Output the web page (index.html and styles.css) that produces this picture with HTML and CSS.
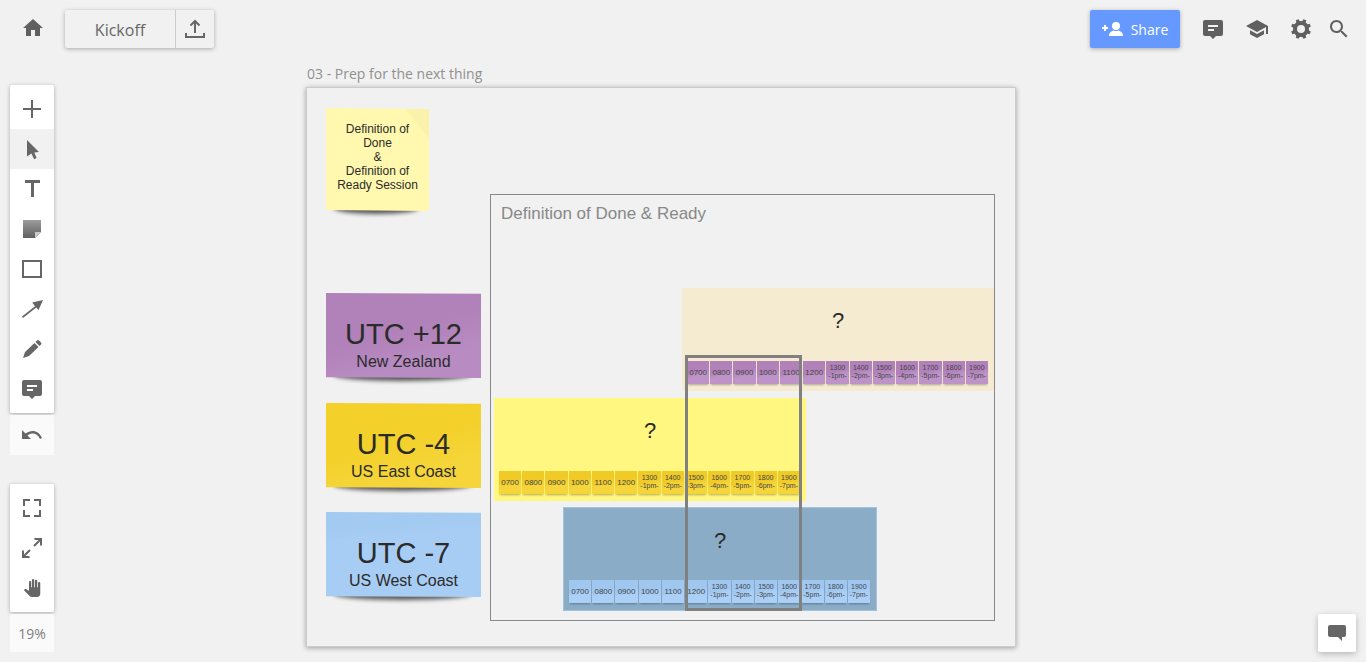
FILE: index.html
```
<!DOCTYPE html>
<html lang="en">
<head>
<meta charset="utf-8">
<meta name="viewport" content="width=device-width, initial-scale=1">
<title>Kickoff</title>
<link rel="stylesheet" href="styles.css">
</head>
<body>
<div class="app">
  <main class="canvas">
    <section class="board">
      <h1 class="board-title">03 - Prep for the next thing</h1>
      <div class="sticky sticky-note">Definition of<br>Done<br>&amp;<br>Definition of<br>Ready Session</div>
      <div class="sticky zone zone-purple"><strong class="zone-name">UTC +12</strong><span class="zone-place">New Zealand</span></div>
      <div class="sticky zone zone-gold"><strong class="zone-name">UTC -4</strong><span class="zone-place">US East Coast</span></div>
      <div class="sticky zone zone-sky"><strong class="zone-name">UTC -7</strong><span class="zone-place">US West Coast</span></div>
      <div class="frame"><h2 class="frame-title">Definition of Done &amp; Ready</h2></div>
      <div class="band band-nz">
        <p class="question">?</p>
        <ol class="hours">
          <li>0700</li><li>0800</li><li>0900</li><li>1000</li><li>1100</li><li>1200</li>
          <li class="pm">1300<br>-1pm-</li><li class="pm">1400<br>-2pm-</li><li class="pm">1500<br>-3pm-</li><li class="pm">1600<br>-4pm-</li><li class="pm">1700<br>-5pm-</li><li class="pm">1800<br>-6pm-</li><li class="pm">1900<br>-7pm-</li>
        </ol>
      </div>
      <div class="band band-east">
        <p class="question">?</p>
        <ol class="hours">
          <li>0700</li><li>0800</li><li>0900</li><li>1000</li><li>1100</li><li>1200</li>
          <li class="pm">1300<br>-1pm-</li><li class="pm">1400<br>-2pm-</li><li class="pm">1500<br>-3pm-</li><li class="pm">1600<br>-4pm-</li><li class="pm">1700<br>-5pm-</li><li class="pm">1800<br>-6pm-</li><li class="pm">1900<br>-7pm-</li>
        </ol>
      </div>
      <div class="band band-west">
        <p class="question">?</p>
        <ol class="hours">
          <li>0700</li><li>0800</li><li>0900</li><li>1000</li><li>1100</li><li>1200</li>
          <li class="pm">1300<br>-1pm-</li><li class="pm">1400<br>-2pm-</li><li class="pm">1500<br>-3pm-</li><li class="pm">1600<br>-4pm-</li><li class="pm">1700<br>-5pm-</li><li class="pm">1800<br>-6pm-</li><li class="pm">1900<br>-7pm-</li>
        </ol>
      </div>
      <div class="overlap"></div>
    </section>
  </main>

  <header class="topbar">
    <button class="icon-btn home" aria-label="Home"><svg class="icon" viewBox="0 0 24 24"><path d="M10 20v-6h4v6h5v-8h3L12 3 2 12h3v8z"/></svg></button>
    <div class="project">
      <button class="project-name">Kickoff</button>
      <button class="project-export" aria-label="Export"><svg class="icon line" viewBox="0 0 24 24"><path d="M12 16V4M7.500 8.500 12 4l4.500 4.500M3 16v4h18v-4"/></svg></button>
    </div>
    <nav class="actions">
      <button class="share"><svg class="share-icon" viewBox="0 0 22 16"><path d="M2 4h2v2h2v2H4v2H2V8H0V6h2z"/><circle cx="14" cy="5" r="4"/><path d="M7 15c0-4 3-5 4.500-5.500q2.500 1.200 5 0C18 10 21 11 21 15z"/></svg>Share</button>
      <button class="icon-btn" aria-label="Comments"><svg class="icon" viewBox="0 0 24 24"><path fill-rule="evenodd" d="M4 3h16q2 0 2 2v12q0 2-2 2h-5l-3 3-3-3H4q-2 0-2-2V5q0-2 2-2zm3 5v2h10V8zm0 4v2h6v-2z"/></svg></button>
      <button class="icon-btn" aria-label="Learning"><svg class="icon" viewBox="0 0 24 24"><path d="M5 13.180v4L12 21l7-3.820v-4L12 17zM12 3 1 9l11 6 9-4.910V17h2V9z"/></svg></button>
      <button class="icon-btn" aria-label="Settings"><svg class="icon" viewBox="0 0 24 24"><circle cx="12" cy="12" r="6" fill="none" stroke="currentColor" stroke-width="4"/><g transform="rotate(22.500 12 12)"><path id="teeth" d="M10 5.500 10.500 2h3l.5 3.500zM10 18.500l.5 3.500h3l.5-3.500zM5.500 10 2 10.500v3l3.500.5zM18.500 10l3.500.5v3l-3.500.5z"/><use href="#teeth" transform="rotate(45 12 12)"/></g></svg></button>
      <button class="icon-btn search" aria-label="Search"><svg class="icon" viewBox="0 0 24 24"><path d="M15.500 14h-.79l-.28-.27C15.410 12.590 16 11.110 16 9.500 16 5.910 13.090 3 9.500 3S3 5.910 3 9.500 5.910 16 9.500 16c1.610 0 3.090-.59 4.230-1.570l.27.28v.79l5 4.990L20.490 19zm-6 0C7.010 14 5 11.990 5 9.500S7.010 5 9.500 5 14 7.010 14 9.500 11.990 14 9.500 14z"/></svg></button>
    </nav>
  </header>

  <div class="workspace">
    <aside class="rail">
      <div class="rail-group">
        <div class="panel">
          <button class="tool" aria-label="Add"><svg class="icon line" viewBox="0 0 24 24"><path d="M12 3v18M3 12h18"/></svg></button>
          <button class="tool selected" aria-label="Select"><svg class="icon" viewBox="0 0 24 24"><path d="M7 3l12 12-4.700.4 2.300 5.600-2.500 1.200-2.700-5.700L7 19.500z"/></svg></button>
          <button class="tool" aria-label="Text"><svg class="icon" viewBox="0 0 24 24"><path d="M5 3h15v3h-6v14h-3V6H5z"/></svg></button>
          <button class="tool" aria-label="Sticky note"><svg class="icon" viewBox="0 0 24 24"><defs><linearGradient id="shade" x1="0" y1="0" x2="0" y2="1"><stop offset="0" stop-color="#9c9c9c"/><stop offset="1" stop-color="#606060"/></linearGradient></defs><path fill="url(#shade)" d="M3 3h18v12l-6 6H3z"/><path fill="#c8c8c8" d="M15 15h6l-6 6z"/></svg></button>
          <button class="tool" aria-label="Shape"><svg class="icon line" viewBox="0 0 24 24"><path d="M3 4h18v16H3z"/></svg></button>
          <button class="tool" aria-label="Connector"><svg class="icon" viewBox="0 0 24 24"><path d="M2 19.500 15 9.200 12.200 5.500 23 3l-4.500 10-2.300-2.600L3 21z"/></svg></button>
          <button class="tool" aria-label="Pen"><svg class="icon" viewBox="0 0 24 24"><path d="M3 21l2-6L14.500 6l4 4L9 19zM15.500 5l1.500-1.500q1-1 2 0l2 2q1 1 0 2L19.500 9z"/></svg></button>
          <button class="tool" aria-label="Comment"><svg class="icon" viewBox="0 0 24 24"><path fill-rule="evenodd" d="M4 3h16q2 0 2 2v12q0 2-2 2h-5l-3 3-3-3H4q-2 0-2-2V5q0-2 2-2zm3 5v2h10V8zm0 4v2h6v-2z"/></svg></button>
        </div>
        <button class="tool faded" aria-label="Undo"><svg class="icon" viewBox="0 0 24 24"><path d="M2 7v9h9l-3.500-3.500c5-3.500 10-2 12.500 3.500l2-1C19 7.500 11.500 6 5.500 10.500z"/></svg></button>
      </div>
      <div class="rail-group">
        <div class="panel">
          <button class="tool" aria-label="Fit to screen"><svg class="icon line" viewBox="0 0 24 24"><path d="M4 10V4h6M14 4h6v6M20 14v6h-6M10 20H4v-6"/></svg></button>
          <button class="tool" aria-label="Zoom to selection"><svg class="icon line" viewBox="0 0 24 24"><path d="M14.500 3H21v6.500M21 3l-7 7M3 14.500V21h6.500M3 21l7-7"/></svg></button>
          <button class="tool" aria-label="Pan"><svg class="icon small" viewBox="0 0 24 24"><path d="M23 5.500V20c0 2.200-1.800 4-4 4h-7.300c-1.080 0-2.100-.43-2.850-1.190L1 14.830s1.260-1.230 1.300-1.250c.22-.19.49-.29.79-.29.22 0 .42.060.6.160.4.010 4.310 2.460 4.310 2.460V4c0-.83.67-1.500 1.500-1.500S11 3.170 11 4v7h1V1.500c0-.83.67-1.500 1.500-1.500S15 .67 15 1.500V11h1V2.500c0-.83.67-1.500 1.500-1.500s1.500.67 1.500 1.500V11h1V5.500c0-.83.67-1.500 1.500-1.500s1.500.67 1.500 1.500z"/></svg></button>
        </div>
        <button class="tool faded zoom-level">19%</button>
      </div>
    </aside>
    <button class="chat" aria-label="Chat"><svg class="icon" viewBox="0 0 24 24"><path d="M5 4h14q2 0 2 2v8q0 2-2 2h-2v4l-4-4H5q-2 0-2-2V6q0-2 2-2z"/></svg></button>
  </div>
</div>
</body>
</html>
```
FILE: styles.css
```
* { box-sizing: border-box; }

body {
  margin: 0;
  background: #f1f1f1;
  color: #666;
  font-family: "Open Sans", "Noto Sans", sans-serif;
  font-size: 14px;
}

button {
  display: flex;
  align-items: center;
  justify-content: center;
  padding: 0;
  border: 0;
  background: none;
  color: inherit;
  font: inherit;
  cursor: pointer;
}

h1, h2, p, ol { margin: 0; padding: 0; font-weight: 400; }
ol { list-style: none; }

.icon { display: block; width: 24px; height: 24px; fill: currentColor; }
.icon.line { fill: none; stroke: currentColor; stroke-width: 2; }
.icon.small { width: 18px; height: 18px; }

.app {
  position: relative;
  display: flex;
  flex-direction: column;
  min-height: 100vh;
  overflow: hidden;
}

/* Top bar */
.topbar {
  position: relative;
  display: flex;
  align-items: center;
  padding: 10px 14px 10px 20px;
}
.icon-btn { width: 26px; height: 38px; color: #606060; }
.home { padding-bottom: 2px; }
.project {
  display: flex;
  height: 38px;
  margin-left: 19px;
  border-radius: 2px;
  box-shadow: 0 1px 4px rgba(0, 0, 0, .3);
  background: #f1f1f1;
}
.project-name { width: 110px; padding-top: 2px; font-size: 16px; }
.project-export { width: 39px; border-left: 1px solid #ccc; }
.actions {
  display: flex;
  align-items: center;
  gap: 18px;
  margin-left: auto;
}
.share {
  gap: 7px;
  width: 90px;
  height: 38px;
  margin-right: 2px;
  border-radius: 2px;
  background: #69f;
  box-shadow: 0 1px 4px rgba(0, 0, 0, .3);
  color: #fff;
}
.share-icon { width: 22px; height: 16px; fill: currentColor; }
.search { margin-left: -6px; }

/* Tool rail */
.workspace {
  display: flex;
  flex: 1;
  align-items: flex-end;
  justify-content: space-between;
  padding: 27px 10px 10px;
}
.rail {
  position: relative;
  display: flex;
  flex-direction: column;
  align-self: stretch;
  justify-content: space-between;
  gap: 20px;
  width: 44px;
}
.rail-group { display: flex; flex-direction: column; gap: 2px; }
.panel {
  padding: 4px 0;
  border-radius: 2px;
  background: #fff;
  box-shadow: 0 1px 4px rgba(0, 0, 0, .3);
}
.tool { width: 100%; height: 40px; }
.tool.selected { background: #f1f1f1; }
.tool.faded { background: #fafafa; }
.tool.zoom-level { height: 38px; color: #808080; }
.chat {
  position: relative;
  width: 38px;
  height: 38px;
  border-radius: 2px;
  background: #fff;
  box-shadow: 0 2px 6px rgba(0, 0, 0, .25);
}

/* Free canvas */
.canvas { position: absolute; inset: 0; }
.board {
  position: absolute;
  left: 306px;
  top: 87px;
  width: 710px;
  height: 560px;
  border: 1px solid #ccc;
  background: #f1f1f1;
  box-shadow: 0 1px 5px rgba(0, 0, 0, .35);
  color: #2b2b2b;
  font-family: "Liberation Sans", Arial, sans-serif;
}
.board-title {
  position: absolute;
  left: 0;
  bottom: 100%;
  padding-bottom: 4px;
  color: #909090;
  font-family: "Open Sans", "Noto Sans", sans-serif;
  font-size: 14px;
  line-height: 20px;
  white-space: nowrap;
}

.sticky { position: absolute; text-align: center; }
.sticky::before {
  content: "";
  position: absolute;
  z-index: -1;
  left: 8px;
  right: 10px;
  bottom: -3px;
  height: 12px;
  border-radius: 0 0 50% 50%;
  background: #555;
  filter: blur(2px);
}
.sticky::after {
  content: "";
  position: absolute;
  z-index: -1;
  inset: 0;
  background: var(--paper);
  clip-path: polygon(0 0, 100% 1%, 100% 100%, 0 99%);
}
.sticky-note {
  --paper: linear-gradient(52deg, #fff8ae 86%, #faf2ab 88%);
  z-index: 0;
  left: 19px;
  top: 20px;
  width: 103px;
  height: 103px;
  padding-top: 14px;
  font-size: 12px;
  line-height: 14px;
}
.zone {
  z-index: 0;
  left: 19px;
  width: 155px;
  height: 85px;
  padding-top: 25px;
}
.zone-purple { --paper: linear-gradient(165deg, #b181b9 45%, #b88cc2 75%); top: 205px; }
.zone-gold { --paper: linear-gradient(165deg, #f3d02a 45%, #f5d53a 75%); top: 315px; }
.zone-sky { --paper: linear-gradient(175deg, #a3caf0 20%, #a8cdf5 30%); top: 424px; }
.zone-name { display: block; font-size: 29px; font-weight: 400; line-height: 32px; }
.zone-place { display: block; font-size: 16px; line-height: 24px; }

.frame {
  position: absolute;
  left: 183px;
  top: 106px;
  width: 505px;
  height: 427px;
  padding: 9px 10px;
  border: 1px solid #888;
}
.frame-title { color: #888; font-size: 17px; line-height: 20px; }

.band { position: absolute; height: 103px; }
.band-nz { left: 375px; top: 200px; width: 312px; background: #f4ebd0; --cell: linear-gradient(165deg, #b181b9 45%, #bd93c8 60%); }
.band-east { left: 187px; top: 310px; width: 312px; background: #fff780; --cell: linear-gradient(165deg, #f0cb28 45%, #f5d53a 60%); }
.band-west { left: 256px; top: 419px; width: 314px; height: 104px; border: 1px solid #a3c4dc; background: #8aacc7; --cell: linear-gradient(165deg, #a0c7f0 45%, #abd0f7 60%); }
.question { padding-top: 21px; font-size: 22px; line-height: 24px; text-align: center; }
.hours {
  display: grid;
  grid-template-columns: repeat(13, 1fr);
  gap: 1px;
  margin: 28px 6px 0 5px;
}
.band-west .hours { margin-top: 27px; }
.hours li {
  display: flex;
  align-items: center;
  justify-content: center;
  height: 23px;
  background: var(--cell);
  box-shadow: 0 2px 2px -1px rgba(0, 0, 0, .3);
  color: #444;
  font-size: 8px;
  line-height: 8px;
  text-align: center;
}
.hours .pm { padding-bottom: 2px; font-size: 7px; }

.overlap {
  position: absolute;
  left: 378px;
  top: 267px;
  width: 117px;
  height: 256px;
  border: 3px solid #808080;
}
```
